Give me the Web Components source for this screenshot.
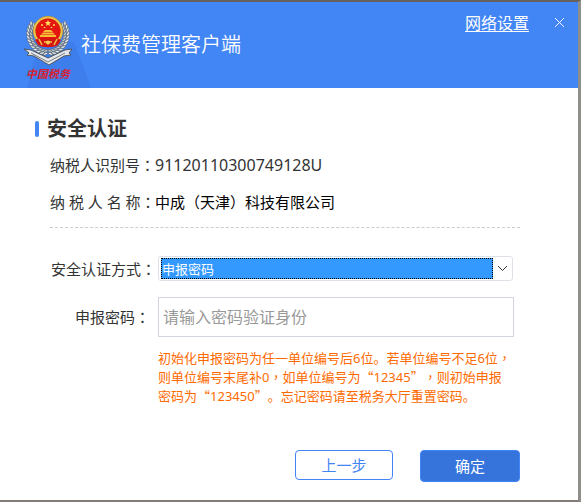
<!DOCTYPE html>
<html lang="zh-CN">
<head>
<meta charset="utf-8">
<title>社保费管理客户端</title>
<style>
body { margin: 0; font-family: "Noto Sans", "Noto Sans CJK SC", sans-serif; color: #333; text-spacing-trim: space-all; }
</style>
</head>
<body>
<app-window>
  <app-header slot="header">社保费管理客户端</app-header>
  <section-title>安全认证</section-title>
  <info-list></info-list>
  <auth-form></auth-form>
</app-window>

<script>
function define(name, html, init) {
  const template = document.createElement('template');
  template.innerHTML = html;
  customElements.define(name, class extends HTMLElement {
    constructor() {
      super();
      this.attachShadow({ mode: 'open' }).append(template.content.cloneNode(true));
      if (init) init(this.shadowRoot);
    }
  });
}

define('tax-emblem', `
<style>
  :host { display: grid; justify-items: center; width: 50px; }
  svg { display: block; width: 50px; height: 52px; }
  span { font: italic 700 11px/14px "Noto Sans CJK SC", sans-serif; color: #d8202f; white-space: nowrap; }
</style>
<svg viewBox="0 0 50 52" aria-hidden="true">
  <g class="wreath"></g>
  <circle cx="25" cy="17" r="15" fill="#b88a2c"/>
  <circle cx="25" cy="17" r="13.500" fill="none" stroke="#e9c54c" stroke-width="2"/>
  <circle cx="25" cy="17" r="12.500" fill="#e5150f"/>
  <path d="M25 6l.9 2 2.200.2-1.700 1.500.5 2.200-1.900-1.200-1.900 1.200.5-2.200-1.700-1.500 2.200-.2z" fill="#ffe15a"/>
  <g fill="#ffd94a"><circle cx="19" cy="11" r="1"/><circle cx="31" cy="11" r="1"/><circle cx="21.500" cy="13.500" r=".8"/><circle cx="28.500" cy="13.500" r=".8"/></g>
  <path d="M20 18l2-2h6l2 2zM18 20.500l2-2h10l2 2zM17 21h16v2H17z" fill="#f4bd35"/>
  <path d="M12 26c4-3 22-3 26 0l-3 5c-4 3-16 3-20 0z" fill="#d51510"/>
  <path d="M16 25l3 6M34 25l-3 6M21 28h8" stroke="#eec14b" stroke-width="1.500" fill="none"/>
  <circle cx="25" cy="28.500" r="2" fill="#f2cf50"/>
  <path d="M1 35l7 1 17 8 17-8 7-1-3 4 2 2-7 1-15 9-15-9-7-1 2-2z" fill="#e5e7ea" stroke="#4f565d" stroke-width="1"/>
  <path d="M8 39l17 9 17-9" fill="none" stroke="#777d82" stroke-width="1"/>
</svg>
<span>中国税务</span>`, root => {
  const wreath = root.querySelector('.wreath');
  const ns = 'http://www.w3.org/2000/svg';
  for (const side of [-1, 1]) {
    for (let i = 0; i < 12; i++) {
      const a = (0.46 - i * 0.058) * Math.PI;
      for (const r of [17, 20]) {
        const leaf = document.createElementNS(ns, 'ellipse');
        const x = 25 + side * Math.cos(a) * r, y = 20 + Math.sin(a) * r;
        leaf.setAttribute('rx', 2.4);
        leaf.setAttribute('ry', 1.1);
        leaf.setAttribute('fill', r === 17 ? '#c9ced3' : '#eef0f2');
        leaf.setAttribute('stroke', '#555c62');
        leaf.setAttribute('stroke-width', .6);
        const deg = (a * 180 / Math.PI - 60) * side;
        leaf.setAttribute('transform', 'translate(' + x + ' ' + y + ') rotate(' + deg + ')');
        wreath.append(leaf);
      }
    }
  }
});

define('app-header', `
<style>
  :host { display: flex; align-items: flex-start; min-height: 86px; box-sizing: border-box; padding: 12px 12px 0 23px;
    background: #4285f5; color: #fff; position: relative; }
  .beam { position: absolute; left: 27px; bottom: 0; width: 64px; height: 46px; }
  tax-emblem { position: relative; }
  h1 { margin: 15px 0 0 8px; font: 400 20px/30px "Noto Sans CJK SC", sans-serif; font-weight: 350; flex: 1; }
  a { color: #fff; font-size: 16px; line-height: 18px; text-decoration: underline; text-underline-offset: 2px; }
  button { margin: 2px 0 0 24px; width: 13px; height: 13px; border: 0; padding: 0; background: none; }
  button svg { display: block; width: 13px; height: 13px; }
</style>
<svg class="beam" viewBox="0 0 64 46" aria-hidden="true"><path d="M12 0H47L64 46H0z" fill="#3d7eec"/></svg>
<tax-emblem></tax-emblem>
<h1><slot></slot></h1>
<a href="#">网络设置</a>
<button type="button" aria-label="关闭"><svg viewBox="0 0 13 13"><path d="M2 2l9 9M11 2l-9 9" stroke="#fff" stroke-width="1"/></svg></button>`);

define('app-window', `
<style>
  :host { display: flex; flex-direction: column; min-height: 100vh; box-sizing: border-box;
    border-style: solid; border-width: 2px 3px 2px 0; border-color: #66615e #8e8e8a #857b78 #888; background: #fff; }
  main { padding: 26px 58px 18px 35px; }
</style>
<slot name="header"></slot>
<main><slot></slot></main>`);

define('section-title', `
<style>
  :host { display: flex; align-items: center; gap: 8px; }
  i { width: 4px; height: 16px; border-radius: 2px; background: #4285f5; }
  h2 { margin: 0; font-size: 20px; line-height: 30px; font-weight: 700; }
</style>
<i></i><h2><slot></slot></h2>`);

define('info-list', `
<style>
  :host { display: block; margin-left: 15px; padding: 3px 0 6px; border-bottom: 1px dashed #ccc; font-size: 15px; line-height: 37px; }
  dl { display: grid; grid-template-columns: 105px 1fr; margin: 0; }
  dt, dd { margin: 0; height: 37px; white-space: nowrap; }
  .id { font-size: 16px; }
  .name { color: #000; }
  .mid { font-family: "Noto Sans CJK TC", sans-serif; line-height: 0; }
</style>
<dl>
  <dt>纳税人识别号<span class="mid" lang="zh-TW">：</span></dt><dd class="id">91120110300749128U</dd>
  <dt>纳 税 人 名 称<span class="mid" lang="zh-TW">：</span></dt><dd class="name">中成（天津）科技有限公司</dd>
</dl>`);

define('auth-form', `
<style>
  :host { display: block; margin-left: 15px; padding-top: 28px; }
  form { display: grid; grid-template-columns: 108px 1fr; align-items: center; row-gap: 16px; margin-right: 6px; font-size: 15px; }
  label { text-align: right; line-height: 24px; white-space: nowrap; padding-right: 2px; }
  label[for=password] { padding-right: 8px; }
  .mid { font-family: "Noto Sans CJK TC", sans-serif; line-height: 0; }
  .quote { font-family: "Noto Sans CJK SC", sans-serif; line-height: 0; }
  .select { display: grid; grid-template-columns: 1fr 18px; align-items: center; box-sizing: border-box; height: 25px;
    padding: 1px 1px 1px 2px; border: 1px solid #dfe1e8; border-radius: 3px; margin-right: 1px; }
  select { appearance: none; box-sizing: border-box; width: 100%; height: 21px; padding: 0; border: 1px dotted #000; border-radius: 0;
    background: #3399ff; color: #fff; font: 13px/19px "Noto Sans CJK SC", sans-serif; outline: 0; }
  .select svg { width: 11px; height: 7px; justify-self: center; }
  input { box-sizing: border-box; width: 100%; height: 40px; padding: 0 4px; border: 1px solid #d0d4de; border-radius: 0; outline: 0;
    font: 16px/24px "Noto Sans", "Noto Sans CJK SC", sans-serif; color: #333; }
  input::placeholder { color: #999; opacity: 1; }
  p { grid-column: 2; margin: -4px 0 0; font-size: 13px; line-height: 19px; color: #ff6a00; white-space: nowrap; }
  .actions { grid-column: 1 / -1; display: flex; justify-content: flex-end; align-items: flex-start; gap: 27px; margin: 28px -6px 0 0; }
  button { box-sizing: border-box; font: 15px/22px "Noto Sans CJK SC", sans-serif; border: 1px solid #4285f5; border-radius: 4px; padding: 0; }
  .back { width: 98px; height: 30px; background: #fff; color: #4285f5; }
  .ok { width: 100px; height: 32px; background: #3674dc; color: #fff; }
</style>
<form>
  <label for="method">安全认证方式<span class="mid" lang="zh-TW">：</span></label>
  <div class="select">
    <select id="method"><option>申报密码</option></select>
    <svg viewBox="0 0 11 7" aria-hidden="true"><path d="M1 1l4.500 4.500L10 1" fill="none" stroke="#333" stroke-width="1"/></svg>
  </div>
  <label for="password">申报密码<span class="mid" lang="zh-TW">：</span></label>
  <input id="password" type="password" placeholder="请输入密码验证身份">
  <p>初始化申报密码为任一单位编号后6位。若单位编号不足6位<span class="mid" lang="zh-TW">，</span><br>则单位编号末尾补0<span class="mid" lang="zh-TW">，</span>如单位编号为<span class="quote">“</span>12345<span class="quote">”</span><span class="mid" lang="zh-TW">，</span>则初始申报<br>密码为<span class="quote">“</span>123450<span class="quote">”</span>。忘记密码请至税务大厅重置密码。</p>
  <div class="actions">
    <button class="back" type="button">上一步</button>
    <button class="ok" type="submit">确定</button>
  </div>
</form>`);
</script>
</body>
</html>
